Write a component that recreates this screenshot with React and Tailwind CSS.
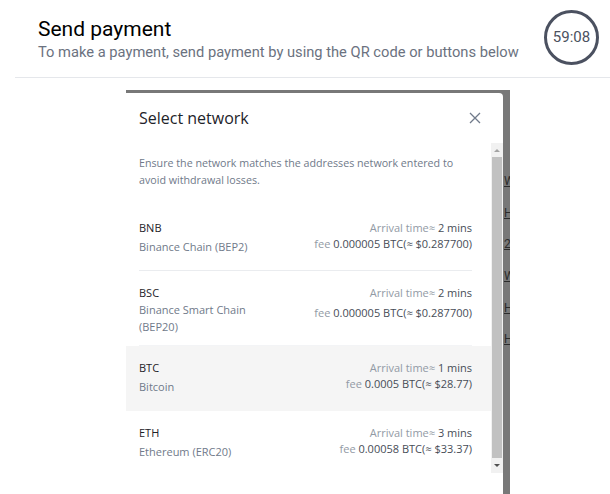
import React from 'react';

const networks = [
  {
    code: 'BNB',
    name: 'Binance Chain (BEP2)',
    mins: '2 mins',
    fee: '0.000005 BTC(≈ $0.287700)',
    rowClass: 'h-[65px] border-b border-[#eaecef]',
    nameClass: 'mt-[2px]',
    feeClass: 'mt-0',
  },
  {
    code: 'BSC',
    name: 'Binance Smart Chain (BEP20)',
    mins: '2 mins',
    fee: '0.000005 BTC(≈ $0.287700)',
    rowClass: 'h-[75px] border-b border-[#f3f4f6]',
    nameClass: 'mt-0',
    feeClass: 'mt-[4px]',
  },
  {
    code: 'BTC',
    name: 'Bitcoin',
    mins: '1 mins',
    fee: '0.0005 BTC(≈ $28.77)',
    rowClass: 'h-[65px]',
    nameClass: 'mt-[2px]',
    feeClass: 'mt-0',
    active: true,
  },
  {
    code: 'ETH',
    name: 'Ethereum (ERC20)',
    mins: '3 mins',
    fee: '0.00058 BTC(≈ $33.37)',
    rowClass: 'h-[65px]',
    nameClass: 'mt-[2px]',
    feeClass: 'mt-0',
  },
];

// bits of the page behind the overlay that peek out on the right
const behind = ['W', 'H', '2', 'W', 'H', 'H'];

const NetworkRow = ({ item }) => (
  <div className={`pl-[13px] pr-[19px] ${item.active ? 'bg-[#f5f5f5]' : 'bg-white'}`}>
    <div className={`flex justify-between items-start pt-[14px] ${item.rowClass}`}>
      <div className="w-[118px]">
        <div className="text-[11px] leading-[16px] font-medium text-[#1e2329]">{item.code}</div>
        <div className={`text-[11px] leading-[17px] text-[#707a8a] ${item.nameClass}`}>{item.name}</div>
      </div>
      <div className="text-right text-[11px]">
        <div className="leading-[16px] text-[#929aa5]">
          Arrival time≈ <span className="text-[#474d57]">{item.mins}</span>
        </div>
        <div className={`leading-[16px] text-[#929aa5] ${item.feeClass}`}>
          fee <span className="text-[#474d57]">{item.fee}</span>
        </div>
      </div>
    </div>
  </div>
);

const Scrollbar = () => (
  <div className="w-[12px] h-[330px] bg-[#f1f1f1] flex flex-col items-center">
    <div className="h-[14px] flex items-center justify-center">
      <div className="w-0 h-0 border-l-[3px] border-r-[3px] border-b-[3px] border-l-transparent border-r-transparent border-b-[#a3a3a3]" />
    </div>
    <div className="w-[10px] flex-1 bg-[#c1c1c1]" />
    <div className="h-[15px] flex items-center justify-center">
      <div className="w-0 h-0 border-l-[3px] border-r-[3px] border-t-[3px] border-l-transparent border-r-transparent border-t-[#505050]" />
    </div>
  </div>
);

const App = () => {
  return (
    <div className="w-[610px] h-[494px] bg-white overflow-hidden" style={{ fontFamily: 'Roboto, "Liberation Sans", sans-serif' }}>
      <div className="flex justify-between pl-[38px] pr-[11px]">
        <div className="pt-[16px]">
          <h1 className="text-[21px] leading-[26px] text-black">Send payment</h1>
          <p className="text-[14.7px] leading-[20px] text-[#6b7280]">
            To make a payment, send payment by using the QR code or buttons below
          </p>
        </div>
        <div className="mt-[10px] w-[55px] h-[55px] rounded-full border-[3px] border-[#4b5160] flex items-center justify-center text-[15px] text-[#4b5160]">
          59:08
        </div>
      </div>

      <div className="ml-[15px] mt-[12px] h-px bg-[#e5e7eb]" />

      <div className="ml-[126px] mt-[12px] w-[384px] h-[410px] bg-[#787878] pt-[3px] flex">
        <div className="w-[377px] bg-white rounded-tr-[4px]" style={{ fontFamily: '"Open Sans", "Noto Sans", sans-serif' }}>
          <div className="h-[50px] flex items-center justify-between pl-[13px] pr-[22px]">
            <h2 className="text-[16px] text-[#1e2329]">Select network</h2>
            <button className="text-[#707a8a]">
              <svg width="12" height="12" viewBox="0 0 12 12" fill="none" stroke="currentColor" strokeWidth="1.3">
                <path d="M1 1L11 11M11 1L1 11" />
              </svg>
            </button>
          </div>
          <div className="flex">
            <div className="w-[365px]">
              <p className="px-[13px] pt-[12px] text-[10.7px] leading-[17px] text-[#707a8a]">
                Ensure the network matches the addresses network entered to avoid withdrawal losses.
              </p>
              <div className="mt-[17px]">
                {networks.map((item) => (
                  <NetworkRow key={item.code} item={item} />
                ))}
              </div>
            </div>
            <Scrollbar />
          </div>
        </div>
        <div className="w-[7px] overflow-hidden pt-[80px]">
          {behind.map((ch, i) => (
            <div key={i} className="h-[31.7px] text-[12px] leading-[16px] text-[#2b2b2b] underline pl-px">
              {ch}
            </div>
          ))}
        </div>
      </div>
    </div>
  );
};

export default App;
